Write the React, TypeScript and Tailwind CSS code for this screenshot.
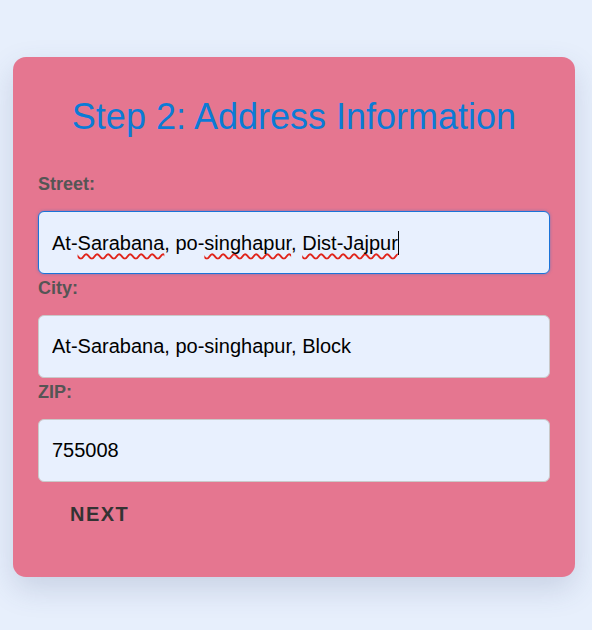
import React from 'react';

const labelCls = 'block mt-[4px] mb-[16px] text-[18px] leading-[21px] font-bold text-[#555]';
const fieldCls =
  'w-full h-[63px] px-[13px] rounded-[6px] border border-[#c9c9c9] bg-[#e8f0fe] text-[20px] text-black outline-none';

const Squiggle = ({ children }: { children: React.ReactNode }) => (
  <span className="underline decoration-wavy decoration-[#e0241b] decoration-[1.5px] underline-offset-[3px] [text-decoration-skip-ink:none]">
    {children}
  </span>
);

export default function App() {
  return (
    <div
      className="min-h-[630px] bg-[#e7effc] pt-[57px]"
      style={{ fontFamily: '"Liberation Sans", Arial, sans-serif' }}
    >
      <form className="ml-[13px] w-[562px] rounded-[13px] bg-[#e57690] px-[25px] pt-[39px] pb-[41px] shadow-[0_12px_30px_rgba(60,80,120,0.18)]">
        <h2 className="text-center text-[36px] leading-[41px] text-[#0b7bd6] mb-[37px]">Step 2: Address Information</h2>

        <label className={labelCls}>Street:</label>
        <div
          role="textbox"
          className="flex items-center w-full h-[63px] px-[13px] rounded-[6px] border border-[#1a73d8] bg-[#e8f0fe] text-[20px] text-black shadow-[0_0_3px_rgba(26,115,216,0.5)]"
        >
          <span className="whitespace-pre">
            At-<Squiggle>Sarabana</Squiggle>, po-<Squiggle>singhapur</Squiggle>, <Squiggle>Dist-Jajpur</Squiggle>
          </span>
          <span className="inline-block w-px h-[24px] bg-black" />
        </div>

        <label className={labelCls}>City:</label>
        <input className={fieldCls} defaultValue="At-Sarabana, po-singhapur, Block" spellCheck={false} />

        <label className={labelCls}>ZIP:</label>
        <input className={fieldCls} defaultValue="755008" spellCheck={false} />

        <button
          type="button"
          className="mt-[11px] px-[32px] py-[10px] bg-transparent text-[20px] leading-[23px] font-bold tracking-[1.5px] text-[#333]"
        >
          NEXT
        </button>
      </form>
    </div>
  );
}
